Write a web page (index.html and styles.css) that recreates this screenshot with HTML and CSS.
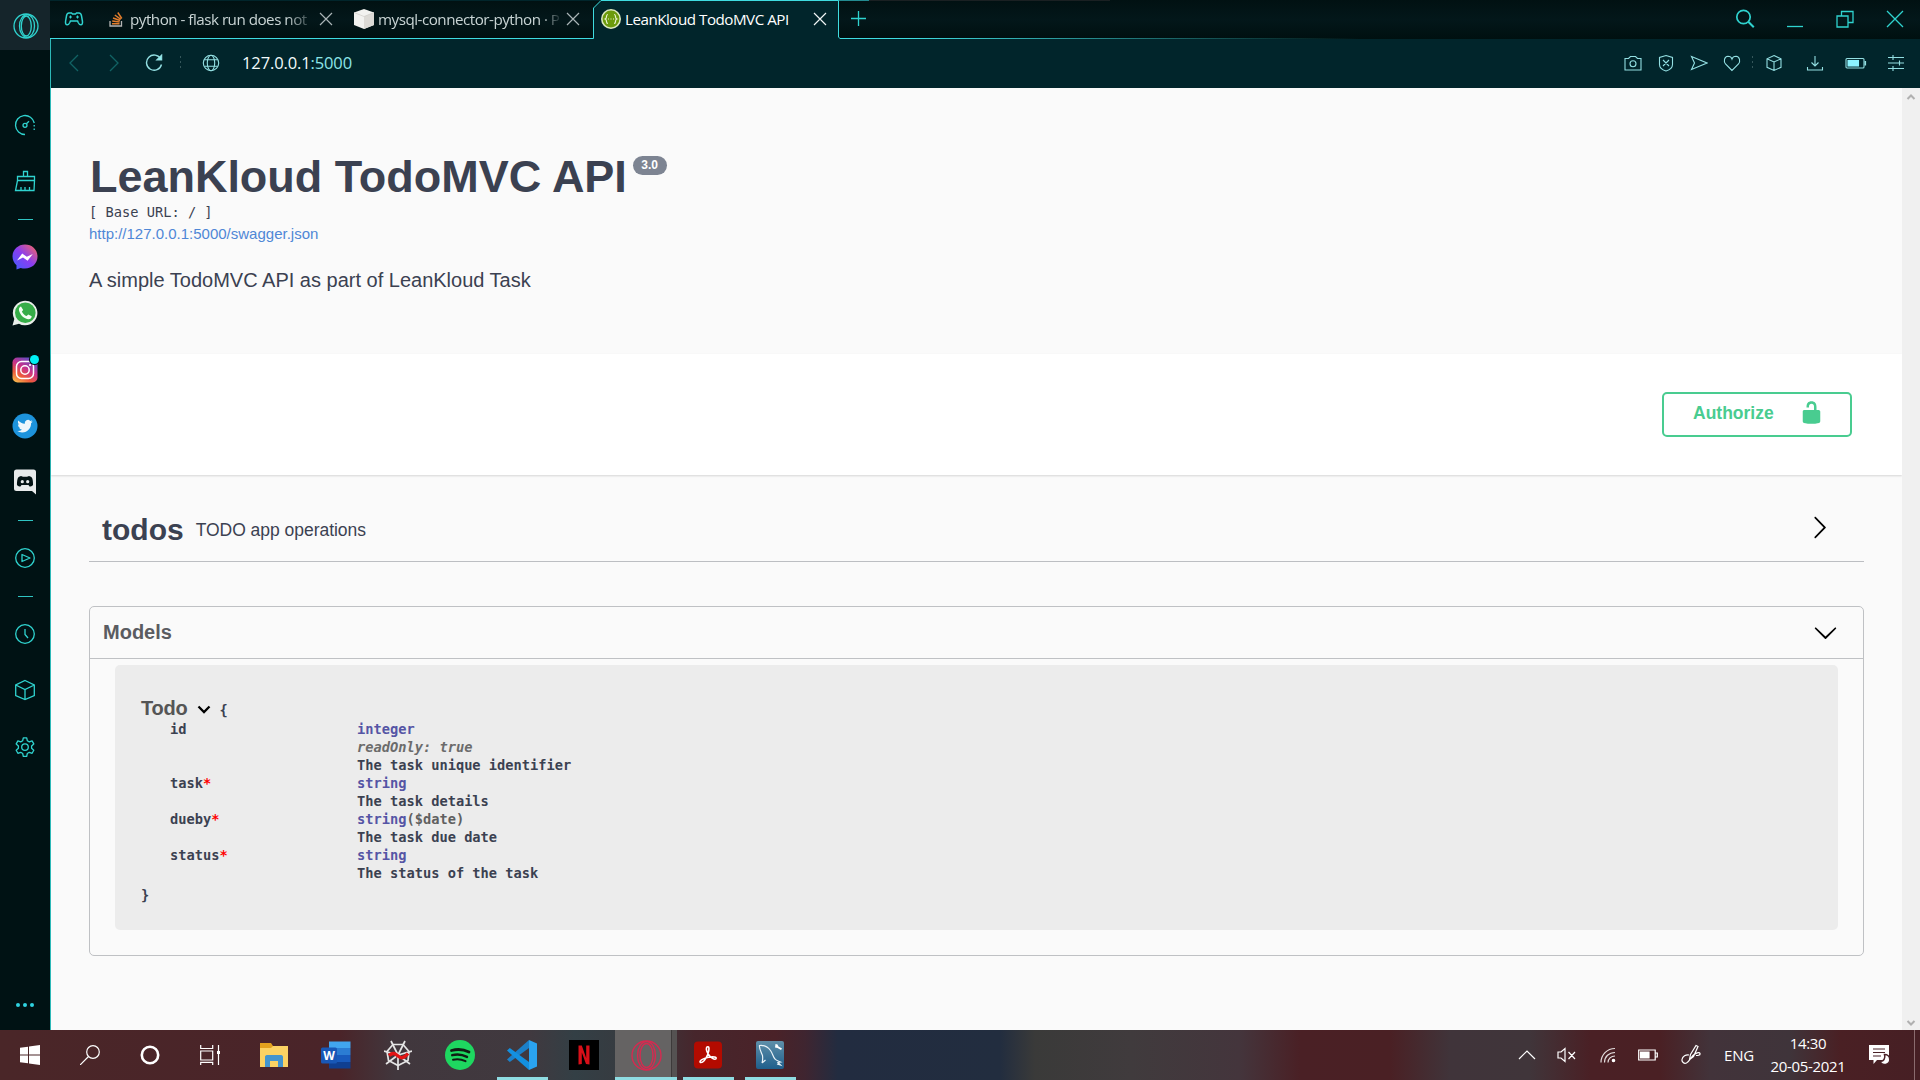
FILE: index.html
```html
<!DOCTYPE html>
<html lang="en">
<head>
<meta charset="utf-8">
<title>LeanKloud TodoMVC API</title>
<link rel="stylesheet" href="styles.css">
</head>
<body>
<div class="screen">
  <div class="browser">
    <nav class="sidebar">
      <div class="side-logo">
        <svg width="26" height="26" viewBox="0 0 26 26" class="line"><circle cx="13" cy="13" r="12"/><ellipse cx="14" cy="13" rx="7.5" ry="11.3"/><ellipse cx="13.3" cy="13" rx="5" ry="10"/></svg>
      </div>
      <div class="side-list">
        <div class="side-item"><svg width="22" height="22" viewBox="0 0 22 22" class="line"><path d="M11 20.5A9.5 9.5 0 1 1 20.3 9"/><path d="M20.2 11v5" stroke-dasharray="1.6 1.8"/><circle cx="11" cy="11.3" r="2"/><path d="M12.4 9.8L15 7.3"/></svg></div>
        <div class="side-item"><svg width="22" height="22" viewBox="0 0 22 22" class="line"><path d="M9.5 6.5V1.5h4v5M3.500 6.500h17v4h-17zM3.500 10.500L1.500 20.500h18.500l.5-10M7 17v3M11 17v3M15.500 17v3"/></svg></div>
        <div class="side-dash"><i></i></div>
        <div class="side-item"><svg width="26" height="26" viewBox="0 0 26 26"><defs><linearGradient id="msg" x1="0" y1="1" x2="1" y2="0"><stop offset="0" stop-color="#3f5dff"/><stop offset=".5" stop-color="#8a3df0"/><stop offset="1" stop-color="#ff6a58"/></linearGradient></defs><path d="M13 .5C6 .5.5 5.600.5 12.500c0 3.500 1.500 6.500 4 8.800V25.500l4.200-1.600c1.300.4 2.800.6 4.300.6 7 0 12.500-5 12.500-12S20 .5 13 .5z" fill="url(#msg)"/><path d="M5 16.500l5.200-7 4.600 3.300 6-2.800-5.200 6.700-4.600-3.200z" fill="#fff"/></svg></div>
        <div class="side-item"><svg width="26" height="26" viewBox="0 0 26 26"><path d="M.5 25.500l1.800-6.600A12.300 12.300 0 1 1 7 23.700z" fill="#e9eeea"/><circle cx="13.300" cy="12.700" r="10.300" fill="#36ad48"/><path d="M9 6.500c-1.500.5-2.500 2-2 4 1.200 4.500 4.500 7.700 9 8.700 2 .3 3.600-.9 3.700-3l-3.500-1.800-1.500 1.700c-2.200-.9-3.900-2.500-4.800-4.700l1.300-1.500z" fill="#f4fff4"/></svg></div>
        <div class="side-item badge-host"><svg width="26" height="26" viewBox="0 0 26 26"><defs><linearGradient id="ig" x1=".1" y1="1" x2=".7" y2="0"><stop offset="0" stop-color="#f9c150"/><stop offset=".3" stop-color="#ee5b3a"/><stop offset=".6" stop-color="#c8328c"/><stop offset="1" stop-color="#5a4fc8"/></linearGradient></defs><rect x=".5" y=".5" width="25" height="25" rx="5" fill="url(#ig)"/><g fill="none" stroke="#fff" stroke-width="1.500"><rect x="4.500" y="4.500" width="17" height="17" rx="5"/><circle cx="13" cy="13" r="4.200"/></g><circle cx="18" cy="8" r="1.100" fill="#fff"/></svg><span class="badge"></span></div>
        <div class="side-item"><svg width="26" height="26" viewBox="0 0 26 26"><circle cx="13" cy="13" r="12.500" fill="#1d93dc"/><path transform="translate(5.300 5.500) scale(.64)" fill="#eef6fb" d="M23.950 4.570a10 10 0 0 1-2.820.77 4.960 4.960 0 0 0 2.160-2.720c-.95.55-2 .95-3.130 1.180a4.920 4.920 0 0 0-8.380 4.480C7.690 8.090 4.070 6.130 1.640 3.160a4.820 4.820 0 0 0-.67 2.480c0 1.710.87 3.210 2.190 4.100a4.900 4.900 0 0 1-2.230-.62v.06a4.920 4.920 0 0 0 3.950 4.830 5 5 0 0 1-2.210.08 4.940 4.940 0 0 0 4.600 3.420A9.870 9.870 0 0 1 0 19.540a13.990 13.990 0 0 0 7.550 2.210c9.050 0 14-7.500 14-13.980 0-.21 0-.42-.02-.63a9.940 9.940 0 0 0 2.460-2.550z"/></svg></div>
        <div class="side-item"><svg width="24" height="26" viewBox="0 0 24 26"><path d="M3.500.5h17A2.500 2.500 0 0 1 23 3v22.500l-4-3.500H3.500A2.500 2.500 0 0 1 1 19.500V3A2.500 2.500 0 0 1 3.500.5z" fill="#e8eaeb"/><path d="M8 7l2 .7h4L16 7c2 .5 3 1.300 3.300 2.500.6 2 .8 4.500.7 6.500-1 1-2.200 1.500-3.500 1.600L15.500 16h-7l-1 1.600C6.200 17.500 5 17 4 16c-.1-2 .1-4.500.7-6.500C5 8.300 6 7.500 8 7z" fill="#041214"/><circle cx="9.300" cy="12.700" r="1.600" fill="#e8eaeb"/><circle cx="14.700" cy="12.700" r="1.600" fill="#e8eaeb"/></svg></div>
        <div class="side-dash"><i></i></div>
        <div class="side-item"><svg width="22" height="22" viewBox="0 0 22 22" class="line"><circle cx="11" cy="11" r="9.300"/><path d="M8 7.500v7l8-3.500z" stroke-linejoin="round"/></svg></div>
        <div class="side-dash"><i></i></div>
        <div class="side-item"><svg width="22" height="22" viewBox="0 0 22 22" class="line"><circle cx="11" cy="11" r="9.300"/><path d="M11 6v5.500l3 3.500"/></svg></div>
        <div class="side-item"><svg width="22" height="22" viewBox="0 0 22 22" class="line"><path d="M11 1.500l9.300 4.500v10.500L11 20.500l-9.300-4V6zM1.700 6L11 10.500 20.300 6M11 10.500v10"/></svg></div>
        <div class="side-item"><svg width="22" height="22" viewBox="0 0 22 22" class="line"><path d="M9.300 1.800h3.400l.6 2.900 2 1.200 2.800-1 1.700 3-2.200 2v2.400l2.200 2-1.700 3-2.800-1-2 1.200-.6 2.900H9.300l-.6-2.900-2-1.200-2.800 1-1.700-3 2.200-2V9.900l-2.200-2 1.700-3 2.800 1 2-1.200z" stroke-linejoin="round"/><circle cx="11" cy="11.100" r="3.300"/></svg></div>
      </div>
      <div class="side-more"><i></i><i></i><i></i></div>
    </nav>

    <div class="window">
      <header class="tabstrip">
        <div class="pad"><svg width="20" height="16" viewBox="0 0 20 16" class="line"><path d="M5 2h2.500l1 1h3l1-1H15c1.600 0 2.200 1 2.500 3l.9 5c.4 2.500-.3 3.800-1.600 3.800-1.200 0-2-1-2.600-2.300l-.6-1.500H6.400l-.6 1.500C5.200 12.800 4.400 13.800 3.200 13.800 1.900 13.800 1.200 12.500 1.600 10l.9-5c.3-2 .9-3 2.500-3z" stroke-width="1.500"/><path d="M5 6h3M6.500 4.500v3M12 6h3M13.500 4.500v3" stroke-width="1"/></svg></div>
        <div class="tab tab-one">
          <svg width="14" height="16" viewBox="0 0 14 16"><path d="M1 10v5h11.500v-5" fill="none" stroke="#b5b5b5" stroke-width="1.300"/><path d="M3 12.700h7.500M3.200 10l7.400 1M4 7l7 2.500M5.800 4l6 4.300M8.800 1.500l4 6" stroke="#e07c2c" stroke-width="1.500"/></svg>
          <span class="tab-title">python - flask run does not</span>
          <svg class="x" width="14" height="14" viewBox="0 0 14 14"><path d="M1 1l12 12M13 1L1 13"/></svg>
        </div>
        <div class="tab tab-two">
          <svg width="20" height="20" viewBox="0 0 20 20"><path d="M10 0l10 3.500v12.500L10 20 0 16V3.500z" fill="#f2f2f0"/><path d="M10 7.500L20 3.500v12.500L10 20z" fill="#dcdad6"/><path d="M0 3.500l10 4 10-4" fill="none" stroke="#c9c7c2" stroke-width=".6"/></svg>
          <span class="tab-title">mysql-connector-python · P</span>
          <svg class="x" width="14" height="14" viewBox="0 0 14 14"><path d="M1 1l12 12M13 1L1 13"/></svg>
        </div>
        <div class="tab tab-active">
          <svg class="tab-shape" width="247" height="39" viewBox="0 0 247 39"><path d="M.5 39V8L8 .5h237.500V36l1.500 3z" fill="#01252b"/><path d="M.5 38.500V8L8 .5h237.500V37l1.500 1.500" fill="none" stroke="#3fdce0"/></svg>
          <svg class="fav" width="20" height="20" viewBox="0 0 20 20"><circle cx="10" cy="10" r="9.200" fill="#6c9a0c" stroke="#dbe8be" stroke-width="1.600"/><path d="M7 5.500c-1.500 0-1.500.8-1.500 2s0 2-1.300 2.500c1.300.5 1.300 1.300 1.300 2.500s0 2 1.500 2M13 5.500c1.500 0 1.500.8 1.500 2s0 2 1.300 2.500c-1.300.5-1.300 1.300-1.300 2.500s0 2-1.500 2M7 10h1M9.500 10h1M12 10h1" fill="none" stroke="#e9f3d0" stroke-width="1.200"/></svg>
          <span class="tab-title">LeanKloud TodoMVC API</span>
          <svg class="x" width="14" height="14" viewBox="0 0 14 14"><path d="M1 1l12 12M13 1L1 13"/></svg>
        </div>
        <div class="newtab"><svg width="16" height="16" viewBox="0 0 16 16" class="line"><path d="M7.500 0v15M0 7.500h15"/></svg></div>
        <div class="controls">
          <div><svg width="20" height="20" viewBox="0 0 20 20" class="line"><circle cx="8.500" cy="8" r="6.700" stroke-width="1.700"/><path d="M13.300 12.800l5.500 5.500" stroke-width="2"/></svg></div>
          <div><svg width="16" height="18" viewBox="0 0 16 18" class="line"><path d="M0 16.500h16"/></svg></div>
          <div><svg width="18" height="18" viewBox="0 0 18 18" class="line"><path d="M1 6h11v11H1zM5.500 6V1.500h11.500v11H12"/></svg></div>
          <div><svg width="18" height="18" viewBox="0 0 18 18" class="line"><path d="M1 1l16 16M17 1L1 17"/></svg></div>
        </div>
      </header>

      <div class="toolbar">
        <div class="nav dim"><svg width="12" height="18" viewBox="0 0 12 18" class="line"><path d="M10 1L2 9l8 8"/></svg></div>
        <div class="nav dim"><svg width="12" height="18" viewBox="0 0 12 18" class="line"><path d="M2 1l8 8-8 8"/></svg></div>
        <div class="nav"><svg width="18" height="18" viewBox="0 0 18 18" class="line pale"><path d="M15.800 5A7.600 7.600 0 1 0 16.500 10.500" stroke-width="1.400"/><path d="M16.700 1v5h-5z" fill="#8ff0f2"/></svg></div>
        <i class="vdots"></i>
        <div class="globe"><svg width="18" height="18" viewBox="0 0 18 18" class="line pale"><circle cx="9" cy="9" r="7.700"/><ellipse cx="9" cy="9" rx="3.700" ry="7.700"/><path d="M2.200 5.800h13.600M2.200 12.200h13.600"/></svg></div>
        <div class="url">127.0.0.1<span>:5000</span></div>
        <div class="tools">
          <div class="t1"><svg width="18" height="18" viewBox="0 0 18 18" class="line pale"><path d="M1 4.500h3.500l2-2h5l2 2H17v11.500H1z"/><circle cx="9" cy="9.700" r="3"/></svg></div>
          <div class="t1"><svg width="18" height="18" viewBox="0 0 18 18" class="line pale"><path d="M9 1.500l6.500 2v7c0 3-3 5.500-6.500 6.500-3.500-1-6.500-3.500-6.500-6.500v-7zM6 6l6 6M12 6l-6 6"/></svg></div>
          <div class="t1"><svg width="18" height="18" viewBox="0 0 18 18" class="line pale"><path d="M1.500 2.500L17 9 1.500 15.500 4.500 9z"/></svg></div>
          <div class="t1"><svg width="18" height="18" viewBox="0 0 18 18" class="line pale"><path d="M9 16.500L2.500 10C.5 7.500 1 2.500 5 2.200 7 2.200 8.500 3.500 9 5c.5-1.500 2-2.800 4-2.800 4 .3 4.500 5.300 2.500 7.800z"/></svg></div>
          <i class="vdots"></i>
          <div class="t2"><svg width="18" height="18" viewBox="0 0 18 18" class="line pale"><path d="M9 1.500l7 3.300v8.500L9 16.500l-7-3.200V4.800zM2 4.800L9 8l7-3.200M9 8v8.500"/></svg></div>
          <div class="t3"><svg width="18" height="18" viewBox="0 0 18 18" class="line pale"><path d="M9 2v10M5.500 8.500L9 12l3.500-3.500M1.500 13v3h15v-3"/></svg></div>
          <div class="t3"><svg width="22" height="12" viewBox="0 0 22 12" class="line pale"><rect x="1" y="1.500" width="18" height="9.500" rx="1"/><rect x="3" y="3.500" width="10.500" height="5.500" fill="#8cf4ff" stroke="#8cf4ff"/><path d="M20.300 4v4.500" stroke-width="1.600"/></svg></div>
          <div class="t3"><svg width="18" height="18" viewBox="0 0 18 18" class="line pale"><path d="M1 3.500h16M1 9h16M1 14.500h16M6 1v5M12.500 6.500v5M6 12v5"/></svg></div>
        </div>
      </div>

      <div class="viewport">
        <main class="page">
          <section class="info">
            <h1>LeanKloud TodoMVC API<span class="version">3.0</span></h1>
            <div class="base-url">[ Base URL: / ]</div>
            <a class="spec-link">http://127.0.0.1:5000/swagger.json</a>
            <p class="desc">A simple TodoMVC API as part of LeanKloud Task</p>
          </section>
          <section class="scheme">
            <button class="authorize"><span>Authorize</span><svg width="25" height="25" viewBox="0 0 20 20"><path fill="#49cc90" d="M15.800 8H14V5.600C14 2.703 12.665 1 10 1 7.334 1 6 2.703 6 5.600V6h2v-.801C8 3.754 8.797 3 10 3c1.203 0 2 .754 2 2.199V8H4c-.553 0-1 .646-1 1.199V17c0 .549.428 1.139.951 1.307l1.197.387C5.672 18.861 6.550 19 7.100 19h5.800c.549 0 1.428-.139 1.951-.307l1.196-.387c.524-.167.953-.757.953-1.306V9.199C17 8.646 16.352 8 15.800 8z"/></svg></button>
          </section>
          <section class="body">
            <div class="tag"><b>todos</b><span>TODO app operations</span><svg width="25" height="25" viewBox="0 0 20 20"><path d="M13.250 10L6.109 2.580c-.268-.27-.268-.707 0-.979.268-.27.701-.27.969 0l7.830 7.908c.268.271.268.709 0 .979l-7.830 7.908c-.268.271-.701.270-.969 0-.268-.269-.268-.707 0-.979L13.250 10z"/></svg></div>
            <div class="models">
              <div class="models-head"><b>Models</b><svg width="25" height="25" viewBox="0 0 20 20"><path d="M17.418 6.109c.272-.268.709-.268.979 0s.271.701 0 .969l-7.908 7.830c-.270.268-.707.268-.979 0l-7.908-7.830c-.270-.268-.270-.701 0-.969.271-.268.709-.268.979 0L10 13.250l7.418-7.141z"/></svg></div>
              <div class="model">
                <div class="model-title"><b>Todo</b><svg width="16" height="16" viewBox="0 0 16 16"><path d="M2.500 5.500L8 11l5.500-5.500" fill="none" stroke="#000" stroke-width="2.300"/></svg><span>{</span></div>
                <div class="props">
                  <span>id</span><div><em class="type">integer</em><br><em class="prop">readOnly: true</em><br>The task unique identifier</div>
                  <span>task<i>*</i></span><div><em class="type">string</em><br>The task details</div>
                  <span>dueby<i>*</i></span><div><em class="type">string</em><em class="fmt">($date)</em><br>The task due date</div>
                  <span>status<i>*</i></span><div><em class="type">string</em><br>The status of the task</div>
                </div>
                <div class="model-end">}</div>
              </div>
            </div>
          </section>
        </main>
        <div class="scrollbar">
          <svg width="10" height="8" viewBox="0 0 10 8"><path d="M1.500 6L5 2.500 8.500 6"/></svg>
          <svg width="10" height="8" viewBox="0 0 10 8"><path d="M1.500 2L5 5.500 8.500 2"/></svg>
        </div>
      </div>
    </div>
  </div>

  <footer class="taskbar">
    <div class="sys"><svg width="20" height="20" viewBox="0 0 20 20" fill="#fff"><path d="M0 2.800L8 1.700v7.800H0zM9 1.500L20 0v9.500H9zM0 10.500h8v7.800L0 17.200zM9 10.500h11V20L9 18.500z"/></svg></div>
    <div class="sys"><svg width="20" height="20" viewBox="0 0 20 20" class="white"><circle cx="13" cy="7" r="6.300"/><path d="M8.500 11.500L0 20"/></svg></div>
    <div class="sys"><svg width="20" height="20" viewBox="0 0 20 20" class="white"><circle cx="10" cy="10" r="8.200" stroke-width="2.600"/></svg></div>
    <div class="sys"><svg width="20" height="20" viewBox="0 0 20 20" class="white"><path d="M.7 0v3.500h12V0M.7 6h12v9h-12zM.7 20v-2.700h12V20M18.500 0v20"/><path d="M17 6h3v3h-3z" fill="#fff" stroke="none"/></svg></div>
    <div class="apps">
      <div class="app"><svg width="28" height="24" viewBox="0 0 28 24"><path d="M0 0h11l2 3v6H0z" fill="#e2a11e"/><path d="M0 5h11l2-2h15v21H0z" fill="#fbd263"/><path d="M5 24V14c0-1 .5-2 2-2h14c1.500 0 2 1 2 2v10h-5v-6h-8v6z" fill="#4395cf"/></svg></div>
      <div class="app"><svg width="30" height="28" viewBox="0 0 30 28"><path d="M8 .5h21.500V7H8z" fill="#41a5ee"/><path d="M8 7h21.500v7H8z" fill="#2b7cd3"/><path d="M8 14h21.500v7H8z" fill="#185abd"/><path d="M8 21h21.500v6.500H8z" fill="#103f91"/><rect x="0" y="6.500" width="16" height="16" rx="1.500" fill="#1857b6"/><text x="8" y="18.500" text-anchor="middle" class="word">W</text></svg></div>
      <div class="app"><svg width="28" height="30" viewBox="0 0 28 30"><g fill="none" stroke="#e5e5e5" stroke-width="1.700"><path d="M9 4.500h10l6 7-1 9-10 5-9.500-5-1.500-9z"/><path d="M14 15L7 1M14 15L21 1M14 15l14-4M14 15l12 9M14 15v15M14 15L2 24M14 15L0 11"/></g><path d="M5 15.500c4-3.500 6-2 9 .5s6 2.500 10-2.500" fill="none" stroke="#e31414" stroke-width="3.500"/></svg></div>
      <div class="app"><svg width="30" height="30" viewBox="0 0 30 30"><circle cx="15" cy="15" r="15" fill="#1ed760"/><g fill="none" stroke="#101c14" stroke-linecap="round"><path d="M6.500 10.500c6-1.700 12-1.200 17.500 1.500" stroke-width="2.800"/><path d="M7.200 15.200c5-1.400 10-.8 14.800 1.700" stroke-width="2.400"/><path d="M8 19.700c4.500-1 8.500-.5 12.500 1.500" stroke-width="2"/></g></svg></div>
      <div class="app open"><svg width="30" height="30" viewBox="0 0 30 30"><path d="M22 0l8 3.500v23L22 30z" fill="#2aa3f0"/><path d="M22 0L0 19.500 2.800 22 22 8z" fill="#1b80c9"/><path d="M22 30L0 10.500 2.800 8 22 22z" fill="#1390e0"/></svg></div>
      <div class="app"><svg width="30" height="30" viewBox="0 0 30 30"><path d="M0 0h30v30H0z"/><path d="M9.500 5.500h3.300l4.400 12.500V5.500h3.300v19L17 24l-4.200-11.500V24l-3.300.5z" fill="#d80f18"/></svg></div>
      <div class="app open current"><svg width="31" height="31" viewBox="0 0 31 31"><g fill="none" stroke="#d62a50" stroke-width="1.400"><circle cx="15.500" cy="15.500" r="14.500"/><ellipse cx="15.500" cy="15.500" rx="9" ry="14"/><ellipse cx="15.500" cy="15.500" rx="6.500" ry="12"/></g></svg></div>
      <div class="app open"><svg width="28" height="28" viewBox="0 0 28 28"><rect y=".5" width="28" height="27" rx="4" fill="#b30b00"/><path d="M13 6c2.500-1.500 2.500 3 .7 7.500C12 17.500 9 22 6.500 21.500c-2-1 2-4 8-5.300 5-1 8.500-.2 7.500 1.500-1.300 1.500-5.500-1-7.700-4.500C12.500 10 12 7 13 6z" fill="none" stroke="#fff" stroke-width="1.600"/></svg></div>
      <div class="app open"><svg width="28" height="28" viewBox="0 0 28 28"><defs><linearGradient id="my" x1="0" y1="0" x2="0" y2="1"><stop offset="0" stop-color="#5f8fa9"/><stop offset="1" stop-color="#1f5f8c"/></linearGradient></defs><rect width="28" height="28" rx="2" fill="url(#my)"/><path d="M6 22c1-3 .8-5 .5-7.500C5 11 3 8 3.500 4.500 8 4 12 6 14.500 9.500c2.500 3.500 2.500 6.500 4.500 8.500 1 1.500 3 2 5.500 3l-2.500.5 2.500 2.500-3.500-1M6 22l3.500-3" fill="none" stroke="#e9f2f7" stroke-width="1.200"/><path d="M19.500 3l2 .5 1 2 3.500 2-1 1.500-3.500-2-2.500-.5z" fill="#fff"/></svg></div>
    </div>
    <div class="tray">
      <div class="tr-caret"><svg width="18" height="12" viewBox="0 0 18 12" class="white"><path d="M1 10l8-8 8 8"/></svg></div>
      <div class="tr-vol"><svg width="20" height="16" viewBox="0 0 20 16" class="white"><path d="M1 5h3l4-3.500v13L4 11H1zM11.500 5l6.500 7M18 5l-6.500 7"/></svg></div>
      <div class="tr-wifi"><svg width="16" height="16" viewBox="0 0 16 16" class="white"><path d="M1 15.500C1 8 7 1.500 15 1.500M4.500 15.500c0-6 4.500-10 10.500-10M8 15.500c0-3.500 3-6.500 7-6.500" opacity=".85"/><circle cx="13.500" cy="13.500" r="1.200" fill="#fff"/></svg></div>
      <div class="tr-bat"><svg width="20" height="12" viewBox="0 0 20 12" class="white"><path d="M.7 1h16.500v10H.7zM17.500 4h1.800v4h-1.800"/><path d="M2.500 3h8.500v6H2.500z" fill="#fff"/></svg></div>
      <div class="tr-pen"><svg width="20" height="22" viewBox="0 0 20 22" class="white"><path d="M8.500 15.500l1-5L15 1.500l2 1-4.500 10zM8 11c-3-.5-6.500 1-7 4.500-.4 2.500 2 4.500 4.500 3.500S9.500 14 12 11.500s6.500-4 7-2-2.500 2-4 2"/></svg></div>
      <div class="tr-lang">ENG</div>
      <div class="tr-clock"><span>14:30</span><span>20-05-2021</span></div>
      <div class="tr-note"><svg width="22" height="22" viewBox="0 0 22 22"><path d="M0 1h20v15H8l-3.500 4v-4H0z" fill="#fff"/><path d="M4 5h12M4 8.500h12M4 12h8" stroke="#4a2228" stroke-width="1.200"/><path d="M15.500 10.500a5 5 0 1 1-4.500 6.500c3.500.8 5.800-2.500 4.500-6.500z" fill="#fff" stroke="#4a2228" stroke-width="1.500"/></svg></div>
      <i class="peek"></i>
    </div>
  </footer>
</div>
</body>
</html>
```
FILE: styles.css
```css
* { box-sizing: border-box; }
body { margin: 0; overflow: hidden; font-family: "Liberation Sans", Arial, sans-serif; }
svg { display: block; flex: none; }
.screen { width: 1920px; height: 1080px; display: flex; flex-direction: column; }
.browser { height: 1030px; display: flex; }

.line { fill: none; stroke: #2fd3cf; stroke-width: 1.3; }
.pale { stroke: #93dfe2; stroke-width: 1.1; }
.white { fill: none; stroke: #fff; stroke-width: 1.2; }

/* sidebar */
.sidebar { width: 50px; background: #001214; display: flex; flex-direction: column; }
.side-logo { height: 50px; padding: 1px 0 0 1px; background: #15252b; display: flex; align-items: center; justify-content: center; }
.side-list { margin-top: 46.8px; }
.side-item { height: 56.3px; display: flex; align-items: center; justify-content: center; }
.side-dash { height: 19.6px; display: flex; align-items: center; justify-content: center; }
.side-dash i { width: 15px; height: 1px; background: #2fc4c2; }
.side-more { margin-top: auto; height: 50px; display: flex; gap: 3px; align-items: center; justify-content: center; }
.side-more i { width: 4px; height: 4px; border-radius: 50%; background: #2fd3e0; }
.badge-host { position: relative; }
.badge { position: absolute; left: 30px; top: 13px; width: 9px; height: 9px; border-radius: 50%; background: #00f0f5; box-shadow: 0 0 0 1px #001214; }

/* tab strip */
.window { width: 1870px; display: flex; flex-direction: column; border-left: 1px solid #2db9b8; }
.tabstrip {
  height: 39px; display: flex; margin-left: -1px; padding-left: 1px;
  font: 15.2px "Open Sans", "Noto Sans", sans-serif; color: #c9d4d4;
  background:
    linear-gradient(90deg, #3fdce0 0 860px, rgba(63,220,224,0) 1310px) 0 38px / 100% 1px no-repeat,
    linear-gradient(90deg, #01252b 0 760px, #238a90 760px 819px, #1a2022 819px 1060px, transparent 1060px) 0 0 / 100% 1px no-repeat,
    linear-gradient(#011112, #03171a 50%, #001010);
}
.pad { width: 52px; height: 38px; padding: 11px 0 0 13px; }
.tab { width: 245px; height: 38px; display: flex; align-items: center; padding: 0 15px 0 6px; }
.tab-title { white-space: nowrap; overflow: hidden; line-height: 38px; letter-spacing: -.5px; }
.tab-one .tab-title { margin-left: 7px; width: 182px; -webkit-mask-image: linear-gradient(90deg, #000 86%, rgba(0,0,0,.15)); mask-image: linear-gradient(90deg, #000 86%, rgba(0,0,0,.15)); }
.tab-two { padding-right: 13px; }
.tab-two .tab-title { margin-left: 4px; width: 186px; -webkit-mask-image: linear-gradient(90deg, #000 88%, rgba(0,0,0,.1) 98%); mask-image: linear-gradient(90deg, #000 88%, rgba(0,0,0,.1) 98%); }
.x { margin-left: auto; margin-right: 0; fill: none; stroke: #aab4b6; stroke-width: 1.2; }
.tab-active { position: relative; padding: 0 11px 0 8px; color: #fff; }
.tab-shape { position: absolute; left: 0; top: 0; }
.tab-active .fav, .tab-active .tab-title, .tab-active .x { position: relative; }
.tab-active .tab-title { margin-left: 4px; }
.tab-active .x { stroke: #f0f5f5; }
.newtab { padding: 11px 0 0 13px; }
.controls { margin-left: auto; display: flex; }
.controls div { width: 50px; height: 37px; display: flex; align-items: center; justify-content: center; }

/* address bar */
.toolbar { height: 49px; background: #01252b; display: flex; align-items: center; padding: 0 0 2px 3px; }
.nav { width: 40px; display: flex; justify-content: center; }
.dim { opacity: .35; }
.vdots { width: 1px; height: 13px; background: repeating-linear-gradient(#35575b 0 2px, transparent 2px 5px); }
.nav + .vdots { margin-left: 6px; }
.globe { margin-left: 21px; }
.url { margin-left: 22px; font: 16.5px/47px "Open Sans", "Noto Sans", sans-serif; color: #f2fbfb; letter-spacing: -.12px; }
.url span { color: #8ce6e8; }
.tools { margin-left: auto; display: flex; align-items: center; padding-right: 4px; }
.tools div { display: flex; justify-content: center; }
.t1 { width: 33px; }
.t1 + .vdots { margin: 0 0 0 4px; }
.t2 { width: 42px; }
.t3 { width: 40.3px; }

/* page */
.viewport { flex: 1; display: flex; }
.page { flex: 1; background: #fafafa; color: #3b4151; }
.info { height: 266px; padding: 63px 38px 0; }
h1 { margin: 0; padding-left: 1px; height: 52px; font-size: 45px; line-height: 52px; letter-spacing: -.03px; display: flex; align-items: flex-start; white-space: nowrap; }
.version { margin: 5px 0 0 6px; height: 19px; padding: 0 8.5px; border-radius: 10px; background: #7d8492; color: #fff; font: bold 12px/18px "Liberation Sans", sans-serif; letter-spacing: 0; }
.base-url { margin-top: -1px; height: 21px; font: 13.7px/20px "DejaVu Sans Mono", monospace; }
.spec-link { display: block; height: 22px; font-size: 15px; line-height: 22px; color: #4f87d6; }
.desc { margin: 23px 0 0; font-size: 20px; line-height: 24px; }
.scheme { height: 121px; padding: 38px 50px 0; background: #fff; box-shadow: 0 1px 2px rgba(0,0,0,.15); display: flex; justify-content: flex-end; align-items: flex-start; }
.authorize { width: 190px; height: 45px; padding: 0 26px 4px 29px; border: 2px solid #49cc90; border-radius: 5px; background: transparent; display: flex; align-items: center; justify-content: space-between; color: #49cc90; font: bold 17.5px "Liberation Sans", sans-serif; }
.authorize span { padding-top: 2px; }
.body { padding: 25px 38px 0; }
.tag { height: 62px; padding: 0 32px 0 13px; display: flex; align-items: center; border-bottom: 1px solid #bcbec2; }
.tag b { font-size: 30px; margin-top: -2px; }
.tag span { margin-left: 12px; font-size: 17.5px; letter-spacing: -.03px; }
.tag svg { margin-left: auto; margin-top: -6px; }
.models { margin-top: 44px; height: 350px; border: 1px solid #bfc1c4; border-radius: 5px; padding: 0 25px; }
.models-head { margin: 0 -25px; height: 52px; padding: 0 25px 0 13px; display: flex; align-items: center; justify-content: space-between; border-bottom: 1px solid #bfc1c4; color: #5a5c61; font-size: 20px; }
.models-head svg { fill: #000; }
.model { margin-top: 6px; height: 265px; padding: 30px 26px 0; border-radius: 5px; background: #ececec; font: bold 13.7px/18px "DejaVu Sans Mono", monospace; }
.model-title { height: 25px; display: flex; align-items: center; }
.model-title b { font: bold 20px/24px "Liberation Sans", sans-serif; color: #555; letter-spacing: -.2px; }
.model-title svg { margin: 3px 0 0 8px; }
.model-title span { margin: 4px 0 0 8px; font-weight: bold; }
.props { padding-left: 29px; display: grid; grid-template-columns: 187px 1fr; }
.props span i { font-style: normal; color: #f00; }
.props em { font-style: normal; }
.props .type { color: #5555a5; }
.props .prop { font-style: italic; color: #6b6b6b; }
.props .fmt { color: #606060; }
.model-end { margin-top: 4px; }
.scrollbar { width: 18px; background: #f0f0f0; display: flex; flex-direction: column; justify-content: space-between; align-items: center; padding: 5px 0 3px; }
.scrollbar svg { fill: none; stroke: #b0b0b0; stroke-width: 2; }

/* taskbar */
.taskbar {
  height: 50px; display: flex; color: #fff; font: 15px "Open Sans", "Noto Sans", sans-serif;
  background: linear-gradient(90deg, #4a2628 0, #4a2429 340px, #41373d 395px, #40393f 530px, #333f45 575px, #38393e 640px, #47262c 695px, #4a2228 775px, #3f2530 805px, #222c40 838px, #222d3f 1000px, #3a3a39 1035px, #403b3d 1130px, #44353c 1240px, #4a2025 1300px, #4a2024 1390px, #40343a 1450px, #40353a 1530px, #4a2025 1590px, #4a2024 1660px, #42333a 1710px, #3f343a 1790px, #4a2024 1840px, #461f24 1920px);
}
.sys { width: 60px; display: flex; align-items: center; justify-content: center; }
.apps { margin-left: 3px; display: flex; }
.app { width: 62px; display: flex; align-items: center; justify-content: center; }
.open { background: linear-gradient(#8fdce2, #8fdce2) 6px 47px / 51px 3px no-repeat; }
.current { background: linear-gradient(#8fdce2, #8fdce2) 0 47px / 100% 3px no-repeat, linear-gradient(90deg, #656363 0 56px, #3d3a3a 56px 57px, #555252 57px); }
.word { font: bold 12px "Open Sans", sans-serif; fill: #fff; }
.tray { margin-left: auto; display: flex; align-items: center; height: 50px; }
.tray > div { display: flex; justify-content: center; }
.tr-caret { width: 40px; }
.tr-vol { width: 40px; }
.tr-wifi { width: 42px; }
.tr-bat { width: 38px; }
.tr-pen { width: 48px; }
.tr-lang { width: 48px; letter-spacing: -.2px; }
.tr-clock { width: 90px; flex-direction: column; align-items: center; line-height: 23px; letter-spacing: -.35px; }
.tr-note { width: 53px; }
.peek { width: 1px; height: 50px; margin: 0 5px 0 8px; background: #8a6b6e; }
```
